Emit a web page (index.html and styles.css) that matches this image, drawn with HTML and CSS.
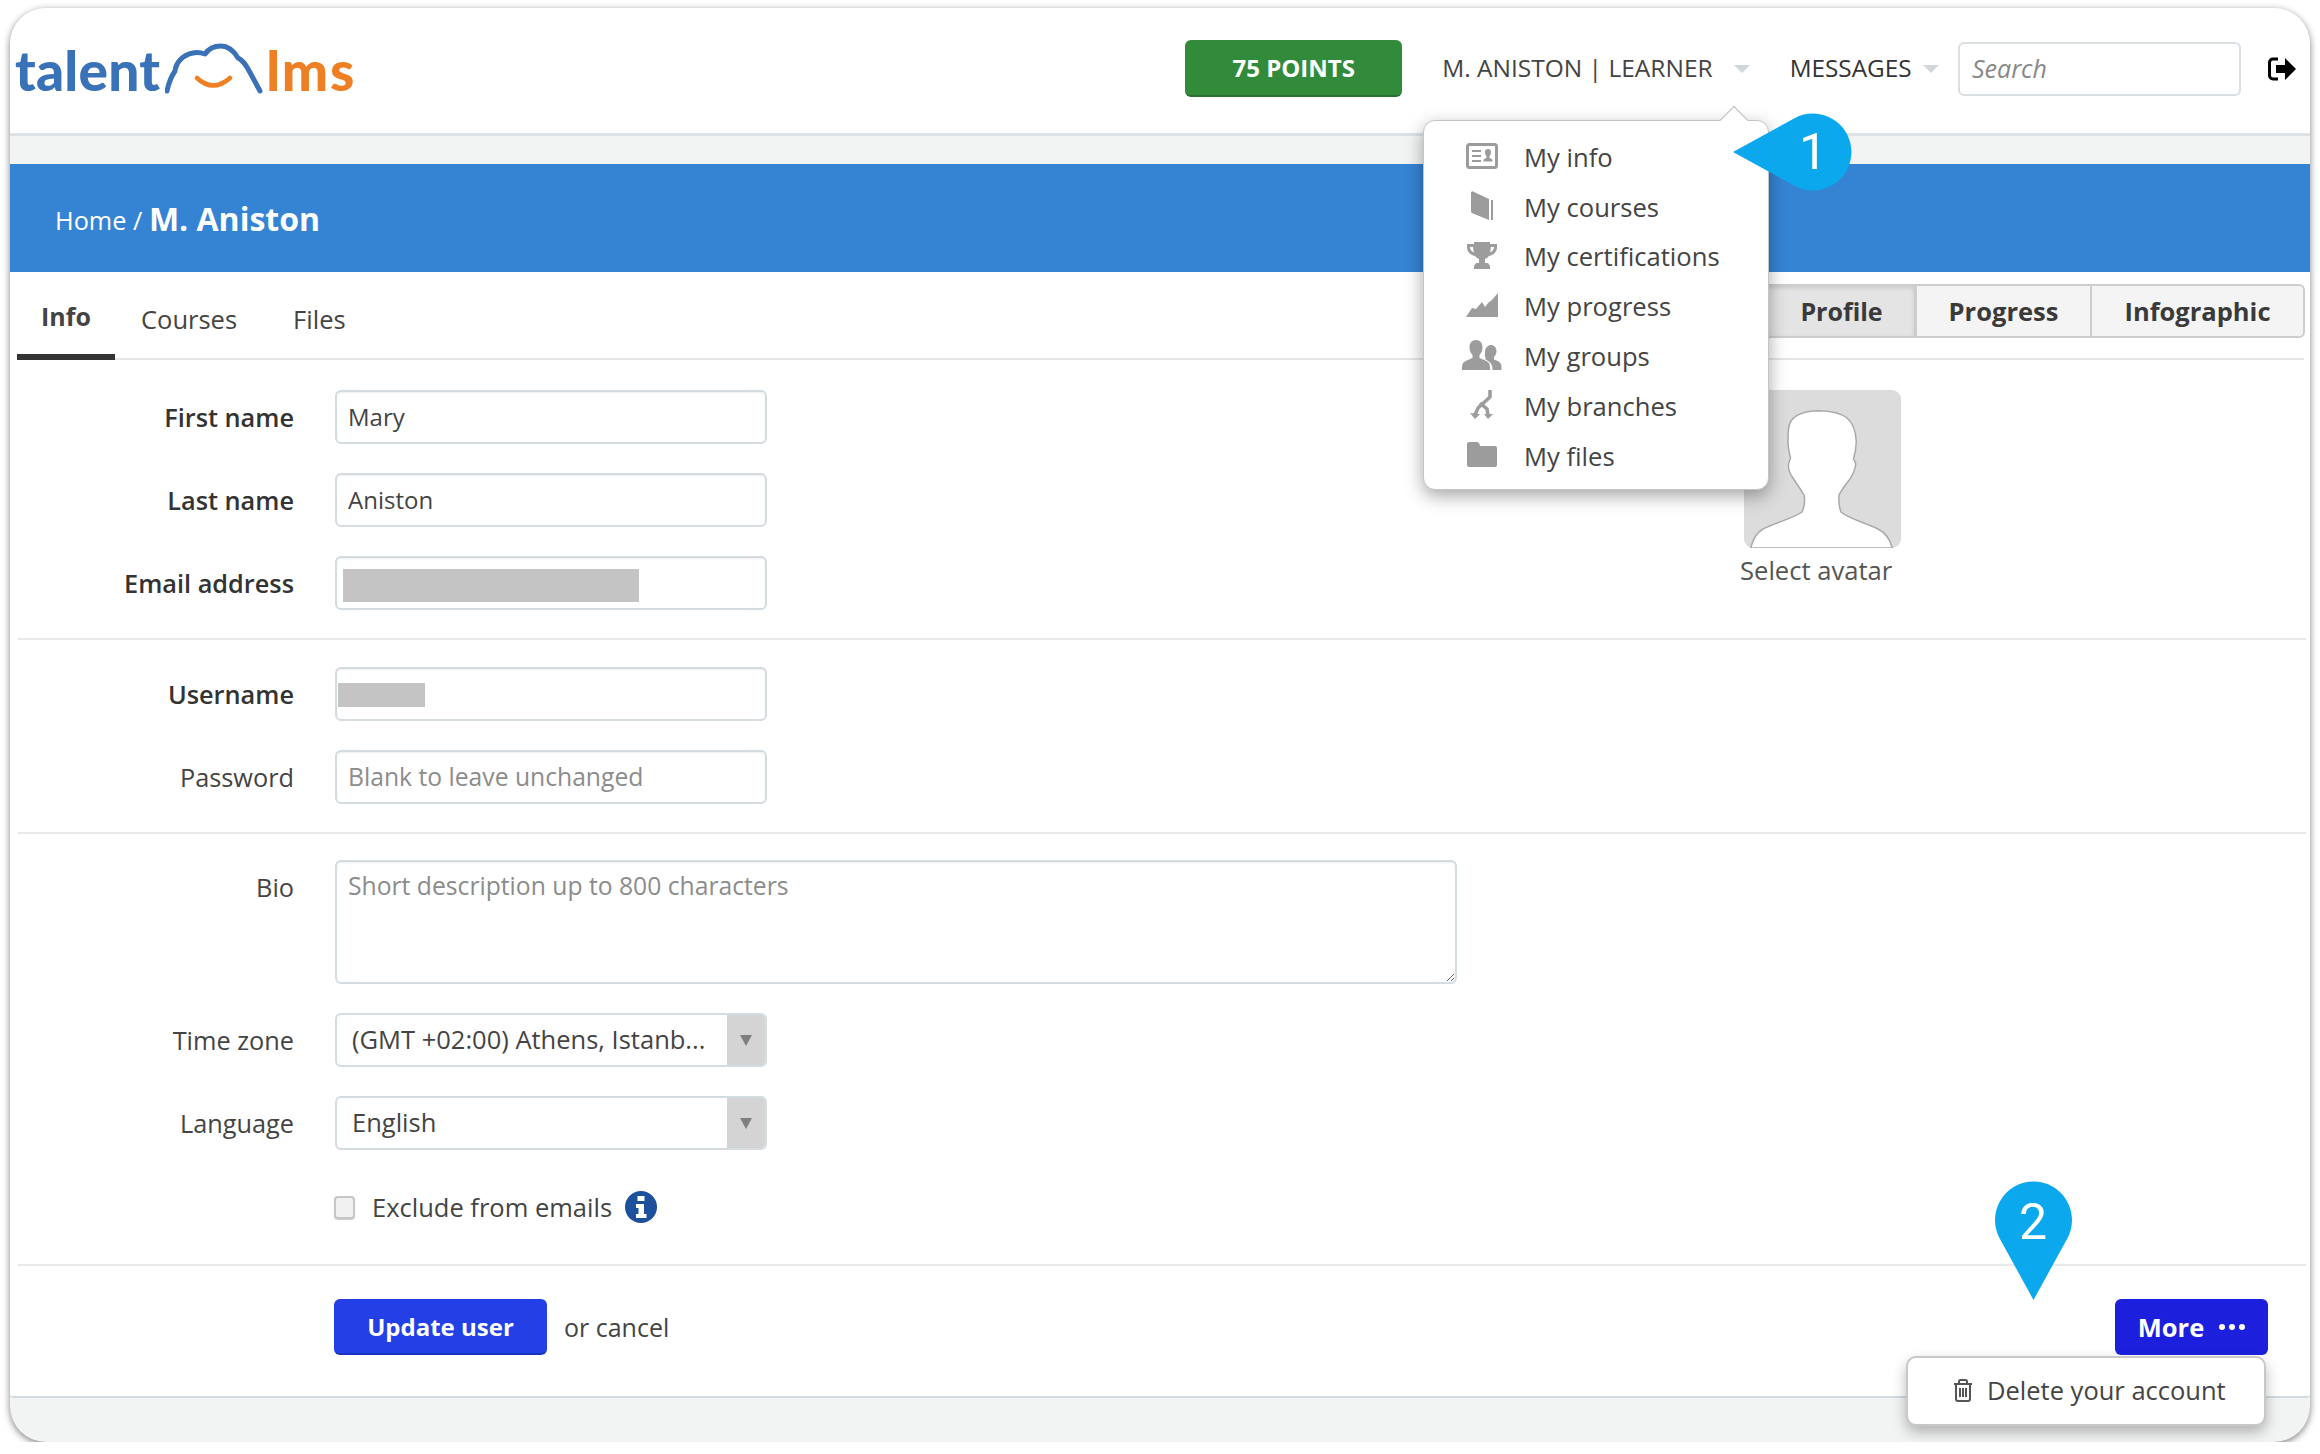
FILE: index.html
```html
<!DOCTYPE html>
<html lang="en">
<head>
<meta charset="utf-8">
<title>M. Aniston</title>
<link rel="stylesheet" href="styles.css">
</head>
<body>
<div class="window">
  <header class="topbar">
    <div class="logo">
      <span class="logo-talent">talent</span>
      <svg class="logo-cloud" width="100" height="56" viewBox="0 0 100 56"><path class="cloud-line" d="M2 50C4 40 8 33 10 30C11 22 17 14 28 12C33 11 37 12 40 13C44 7 50 5 56 5C64 5 70 12 73 17C80 20 84 30 88 37L95 50"/><path class="cloud-smile" d="M32 37Q48 52 65 37"/></svg>
      <span class="logo-lms">lms</span>
    </div>
    <nav class="topnav">
      <a class="points">75 POINTS</a>
      <span class="nav-user">M. ANISTON | LEARNER</span>
      <i class="nav-caret caret-user"></i>
      <span class="nav-msg">MESSAGES</span>
      <i class="nav-caret caret-msg"></i>
      <input class="search" placeholder="Search">
      <svg class="logout" width="30" height="24" viewBox="0 0 30 24"><path class="logout-bracket" d="M11 2H6a3.500 3.500 0 0 0-3.500 3.500v13A3.500 3.500 0 0 0 6 22h5"/><path d="M9 8h9V1l11 11-11 11v-7H9z"/></svg>
    </nav>
  </header>

  <div class="crumbs"><span class="crumb-home">Home / </span><strong class="crumb-name">M. Aniston</strong></div>

  <main class="panel">
    <div class="tabbar">
      <a class="tab tab-active">Info</a>
      <a class="tab">Courses</a>
      <a class="tab">Files</a>
      <div class="seg">
        <a class="seg-btn seg-on">Profile</a>
        <a class="seg-btn seg-b">Progress</a>
        <a class="seg-btn seg-c">Infographic</a>
      </div>
    </div>

    <section class="sect sect-top">
      <div class="fields">
        <div class="field"><label class="lab lab-strong">First name</label><input class="inp" value="Mary"></div>
        <div class="field"><label class="lab lab-strong">Last name</label><input class="inp" value="Aniston"></div>
        <div class="field"><label class="lab lab-strong">Email address</label><div class="inp-wrap"><input class="inp"><span class="redact redact-email"></span></div></div>
      </div>
      <div class="avatar-col">
        <svg class="avatar" width="157" height="158" viewBox="0 0 157 158"><rect class="avatar-bg" width="157" height="158" rx="9"/><path class="avatar-bust" d="M6.700 158C9 149 12 143 19 139C30 133 48 129 58 122C61 116 61 110 60 105C56 98 52 93 49 88C46 84 44 79 44.500 74C45 72 46 70 46.500 68C45 62 44 57 44 52C44 42 44 36 47 31C51 25 60 21 75 20.700C88 21 97 23 103 28C110 34 112 43 112.300 52C112 58 111 64 109.500 69C110.500 71 111.700 72 111.700 75C111 80 109 84 106 89C102 94 98 99 95 105C94.500 111 95 117 97 122C105 129 122 133 134 139C142 143 146 149 148.300 158Z"/></svg>
        <span class="avatar-cap">Select avatar</span>
      </div>
    </section>
    <hr class="rule">
    <section class="sect sect-mid">
      <div class="fields">
        <div class="field"><label class="lab lab-strong">Username</label><div class="inp-wrap"><input class="inp"><span class="redact redact-user"></span></div></div>
        <div class="field"><label class="lab">Password</label><input class="inp" placeholder="Blank to leave unchanged"></div>
      </div>
    </section>
    <hr class="rule">
    <section class="sect sect-low">
      <div class="fields">
        <div class="field field-bio"><label class="lab lab-bio">Bio</label><textarea class="bio" placeholder="Short description up to 800 characters"></textarea></div>
        <div class="field"><label class="lab">Time zone</label><div class="sel"><span class="sel-val">(GMT +02:00) Athens, Istanb...</span><span class="sel-arrow"><i></i></span></div></div>
        <div class="field"><label class="lab">Language</label><div class="sel"><span class="sel-val">English</span><span class="sel-arrow"><i></i></span></div></div>
        <div class="field field-check"><span></span><div class="check-row"><i class="check"></i><span class="check-text">Exclude from emails</span>
          <svg class="info" width="32" height="32" viewBox="0 0 32 32"><circle cx="16" cy="16" r="16"/><path class="info-i" d="M12.500 5h7v5h-7zM11 13h8v10h2.500v4h-10.500v-4h2.500v-6H11z"/></svg></div></div>
      </div>
    </section>
    <hr class="rule">
    <div class="actions">
      <button class="btn-update">Update user</button>
      <span class="or-cancel">or cancel</span>
      <button class="btn-more">More<span class="dots"><i></i><i></i><i></i></span></button>
    </div>
  </main>

  <div class="menu">
    <span class="menu-tip"></span>
    <a class="menu-row"><span class="mi"><svg width="32" height="26" viewBox="0 0 32 26"><rect class="ico-line" x="1.500" y="1.500" width="29" height="23" rx="2"/><path class="ico-fill" d="M6 7h9v2H6zM6 12h9v2H6zM6 17h9v2H6zM22 6a3.200 3.200 0 0 1 3 3.500c0 1.800-1 3.200-1.500 3.800v1.400c1 .7 2.500 1 3 2.300v1.500h-9V17c.5-1.300 2-1.600 3-2.300v-1.400c-.5-.6-1.500-2-1.500-3.800A3.200 3.200 0 0 1 22 6z"/></svg></span>My info</a>
    <a class="menu-row"><span class="mi"><svg width="22" height="30" viewBox="0 0 22 30"><path class="ico-fill" d="M2 .5l16 7.500v21L2 22.500A2.500 2.500 0 0 1 0 20V2.500C0 1 1 0 2 .5z"/><path class="ico-fill" d="M20 9h2v20h-2z"/></svg></span>My courses</a>
    <a class="menu-row"><span class="mi"><svg width="30" height="27" viewBox="0 0 30 27"><path class="ico-fill" d="M7 0h16v2h7v3c0 4.500-3 8-8 9-1 1.500-3 2.500-4 3v4h3l2 3v3H7v-3l2-3h3v-4c-1-.5-3-1.500-4-3-5-1-8-4.500-8-9V2h7zM3 5c0 2.500 1.500 4.500 4 5.500-.5-1.500-.8-3.500-.9-5.500zM27 5h-3.100c-.1 2-.4 4-.9 5.500 2.500-1 4-3 4-5.500z"/></svg></span>My certifications</a>
    <a class="menu-row"><span class="mi"><svg width="32" height="24" viewBox="0 0 32 24"><path class="ico-fill" d="M0 24l6-9 4 1 6-7 3 5 4-5 2-1 7-8v24z"/></svg></span>My progress</a>
    <a class="menu-row"><span class="mi"><svg width="40" height="30" viewBox="0 0 40 30"><path class="ico-fill" d="M14 0c4 0 6.500 3 6.500 7 0 3-1 6-3 8v3c3 1.500 9 3 10 6 .5 2 .5 4 .5 6H0c0-2 0-4 .5-6 1-3 7-4.500 10-6v-3c-2-2-3-5-3-8 0-4 2.500-7 6.500-7z"/><path class="ico-fill" d="M29 5c3 0 5.500 2.500 5.500 6 0 2.500-1 4.500-2.500 6v2.500c2.500 1 6 2 7 4.500.5 2 .5 4 .5 6h-9c0-3-.5-6-3-8-1.500-1.200-3-2-4-2.500v-2c-1-1.500-.5-4-.5-6 0-3.500 3-6.500 6-6.500z"/></svg></span>My groups</a>
    <a class="menu-row"><span class="mi"><svg width="24" height="29" viewBox="0 0 24 29"><path class="ico-stroke" d="M20 0v7L8 18l-3 7M10 13l7 6 1 6"/><path class="ico-fill" d="M0 23l5 6 5-5zM14 24h9l-5 5z"/></svg></span>My branches</a>
    <a class="menu-row"><span class="mi"><svg width="30" height="25" viewBox="0 0 30 25"><path class="ico-fill" d="M2 0h8c1.500 0 2.500 1 3 4h15a2 2 0 0 1 2 2v17a2 2 0 0 1-2 2H2a2 2 0 0 1-2-2V2a2 2 0 0 1 2-2z"/></svg></span>My files</a>
  </div>

  <div class="pin pin-one"><svg width="123" height="78" viewBox="0 0 123 78"><path class="pin-fill" d="M2 39L63.500 5.200A38.500 38.500 0 1 1 63.500 72.800Z"/></svg><span class="pin-num pin-num-one">1</span></div>
  <div class="pin pin-two"><svg width="79" height="120" viewBox="0 0 79 120"><path class="pin-fill" d="M39.500 119L5.700 57.500A38.500 38.500 0 1 1 73.300 57.500Z"/></svg><span class="pin-num pin-num-two">2</span></div>

  <div class="popup"><svg class="trash" width="20" height="23" viewBox="0 0 20 23"><path class="trash-line" d="M1 5h18M6 5V2.500A1.500 1.500 0 0 1 7.500 1h5A1.500 1.500 0 0 1 14 2.500V5M3 5v15a2 2 0 0 0 2 2h10a2 2 0 0 0 2-2V5M7 9v9M10 9v9M13 9v9"/></svg><span>Delete your account</span></div>
</div>
</body>
</html>
```
FILE: styles.css
```css
* { box-sizing: border-box; }
html, body { margin: 0; padding: 0; background: #fff; }
body { font-family: "Open Sans", sans-serif; color: #444; font-size: 25px; }
.window { position: relative; margin: 8px 10px 0; width: 2300px; height: 1434px; background: #f2f3f3; border-radius: 36px; box-shadow: 0 2px 7px rgba(0,0,0,.5); display: flex; flex-direction: column; overflow: visible; }

.topbar { height: 128px; background: #fff; border-radius: 36px 36px 0 0; border-bottom: 3px solid #dde2e4; display: flex; align-items: flex-start; justify-content: space-between; flex: none; }
.logo { display: flex; align-items: flex-start; padding: 32px 0 0 5px; }
.logo-talent, .logo-lms { font-family: Lato, sans-serif; font-weight: 900; font-size: 55px; line-height: 60px; letter-spacing: .2px; }
.logo-talent { color: #3a72b8; }
.logo-lms { color: #ee7f23; margin-left: 1px; letter-spacing: 1.700px; }
.logo-cloud { margin-left: 5px; margin-top: 1px; flex: none; }
.cloud-line { fill: none; stroke: #3a72b8; stroke-width: 5; stroke-linecap: round; stroke-linejoin: round; }
.cloud-smile { fill: none; stroke: #ee7f23; stroke-width: 4.500; stroke-linecap: round; }

.topnav { display: flex; align-items: center; padding: 32px 13px 0 0; color: #444; }
.points { width: 217px; height: 57px; background: #328b3a; border-radius: 6px; border-bottom: 2px solid #28702f; color: #fff; font-weight: 700; font-size: 24px; display: flex; align-items: center; justify-content: center; }
.nav-user { margin: 0 0 2px 40px; font-size: 24.500px; }
.nav-msg { margin: 0 0 2px 40px; font-size: 24.300px; color: #333; }
.nav-caret { width: 0; height: 0; border-left: 8px solid transparent; border-right: 8px solid transparent; border-top: 8px solid #cfd7da; }
.caret-user { margin-left: 21px; }
.caret-msg { margin-left: 11px; }
.search { margin-left: 19.500px; width: 283px; height: 54px; border: 2px solid #d9dfe2; border-radius: 6px; padding: 0 12px 2px; font: italic 25px "Open Sans", sans-serif; outline: none; }
.search::placeholder { color: #888; }
.logout { margin-left: 26px; }
.logout-bracket { fill: none; stroke: #000; stroke-width: 3; }

.crumbs { margin-top: 28px; height: 108px; background: #3584d4; color: #fff; padding-left: 45px; flex: none; display: flex; align-items: center; white-space: pre; }
.crumb-home { font-size: 25.300px; margin-top: 4px; }
.crumb-name { font-size: 32px; font-weight: 700; }

.panel { background: #fff; height: 1126px; border-bottom: 2px solid #cfdbe0; border-radius: 0 0 4px 4px; flex: none; }
.tabbar { height: 88px; margin: 0 6px 0 7px; border-bottom: 2px solid #e4e6e6; display: flex; align-items: flex-start; }
.tab { height: 88px; padding: 29px 26px 0; font-size: 25.500px; line-height: 36px; color: #444; }
.tab:nth-child(3) { margin-left: 4px; }
.tab-active { padding: 26px 24px 0; font-weight: 700; font-size: 25px; width: 98px; border-bottom: 6px solid #333; color: #444; }
.seg { margin-left: auto; margin-top: 12px; margin-right: -1px; display: flex; height: 54px; }
.seg-btn { height: 54px; background: #f4f4f4; border: 2px solid #cdcdcd; font-weight: 700; font-size: 25.500px; color: #3a3a3a; display: flex; align-items: center; justify-content: center; }
.seg-on { width: 176px; background: #e4e4e4; box-shadow: inset 0 2px 4px rgba(0,0,0,.12); padding-left: 26px; border-right-width: 3px; font-size: 25px; }
.seg-b { width: 175px; border-left: none; }
.seg-c { width: 213px; border-left: none; border-radius: 0 6px 6px 0; }

.sect { display: flex; }
.sect-top { padding-top: 30px; }
.sect-mid { padding-top: 27px; }
.sect-low { padding-top: 26px; padding-bottom: 12px; }
.fields { display: flex; flex-direction: column; gap: 29px; width: 1500px; }
.field { display: grid; grid-template-columns: 284px 432px; column-gap: 41px; align-items: center; min-height: 54px; }
.lab { text-align: right; font-size: 25.300px; color: #444; }
.lab-strong { font-weight: 600; color: #333; }
.lab-bio { align-self: start; padding-top: 10px; }
.inp { width: 100%; height: 54px; border: 2px solid #d5dcdf; border-radius: 6px; padding: 0 11px 2px; font: 24px "Open Sans", sans-serif; color: #444; outline: none; display: block; box-shadow: inset 0 1px 2px rgba(0,0,0,.07); }
.inp::placeholder, .bio::placeholder { color: #8c8c8c; opacity: 1; font-size: 24.700px; }
.inp-wrap { position: relative; }
.redact { position: absolute; background: #c4c4c4; }
.redact-email { left: 8px; top: 13px; width: 296px; height: 33px; }
.redact-user { left: 3px; top: 16px; width: 87px; height: 24px; }

.avatar-col { margin-left: 234px; display: flex; flex-direction: column; align-items: flex-start; }
.avatar { display: block; }
.avatar-bg { fill: #dcdcdc; }
.avatar-bust { fill: #fff; stroke: #a9a9a9; stroke-width: 1.500; }
.avatar-cap { font-size: 25.600px; color: #555; margin-left: -4px; margin-top: 3px; line-height: 40px; }

.rule { border: 0; height: 2px; background: #e9eaea; margin: 28px 4px 0 8px; }
.field-bio { grid-template-columns: 284px 1122px; }
.bio { height: 124px; border: 2px solid #d5dcdf; border-radius: 6px; padding: 7px 11px; font: 24.700px "Open Sans", sans-serif; outline: none; width: 100%; display: block; box-shadow: inset 0 1px 2px rgba(0,0,0,.07); }
.sel { height: 54px; border: 2px solid #d5dcdf; border-radius: 6px; display: flex; overflow: hidden; }
.sel-val { flex: 1; padding-left: 15px; font-size: 25.500px; line-height: 48px; color: #444; white-space: nowrap; }
.sel-arrow { width: 38px; background: #d4d4d4; display: flex; align-items: center; justify-content: center; }
.sel-arrow i { width: 0; height: 0; border-left: 6px solid transparent; border-right: 6px solid transparent; border-top: 11px solid #7f7f7f; }
.field-check { margin-top: 11px; min-height: 32px; }
.check-row { display: flex; align-items: center; white-space: nowrap; }
.check { width: 21px; height: 23px; border: 2px solid #c6c6c6; border-radius: 4px; background: #f1f1f1; box-shadow: 0 1px 1px rgba(0,0,0,.2); margin-left: -1px; }
.check-text { margin-left: 17px; font-size: 25.500px; color: #444; }
.info { margin-left: 13px; flex: none; }
.info circle { fill: #1c4f9c; }
.info-i { fill: #fff; }

.actions { display: flex; align-items: center; height: 56px; margin: 33px 0 0 324px; padding-right: 42px; }
.btn-update { width: 213px; height: 56px; background: #2240e6; border: 0; border-bottom: 2px solid #1a34c0; border-radius: 6px; color: #fff; font: 700 24px "Open Sans", sans-serif; }
.or-cancel { margin-left: 17px; font-size: 25px; color: #444; }
.btn-more { margin-left: auto; width: 153px; height: 56px; background: #1c20dd; border: 0; border-radius: 6px; color: #fff; font: 700 25.500px "Open Sans", sans-serif; display: flex; align-items: center; justify-content: center; gap: 15px; }
.dots { display: flex; gap: 4px; }
.dots i { width: 6px; height: 6px; background: #fff; border-radius: 50%; }

.menu { position: absolute; left: 1413px; top: 112px; width: 346px; height: 370px; padding: 11.500px 0 0 38px; background: #fff; border: 1px solid #c4c4c4; border-radius: 12px; box-shadow: 0 6px 18px rgba(0,0,0,.35); }
.menu-tip { position: absolute; left: 300px; top: -11px; width: 20px; height: 20px; background: #fff; border-left: 1px solid #bbb; border-top: 1px solid #bbb; transform: rotate(45deg); }
.menu-row { display: flex; align-items: center; height: 49.800px; font-size: 25.600px; color: #444; }
.mi { width: 40px; margin-right: 22px; display: flex; justify-content: center; margin-bottom: 3px; }
.ico-fill { fill: #9c9c9c; }
.ico-line { fill: #fff; stroke: #9c9c9c; stroke-width: 3; }
.ico-stroke { fill: none; stroke: #9c9c9c; stroke-width: 3.500; }

.pin { position: absolute; }
.pin svg { display: block; }
.pin-fill { fill: #0ba8ee; }
.pin-one { left: 1721px; top: 105px; }
.pin-two { left: 1984px; top: 1173px; }
.pin-num { position: absolute; font-family: Roboto, sans-serif; font-weight: 400; font-size: 50px; color: #fff; line-height: 60px; }
.pin-num-one { left: 68px; top: 9px; }
.pin-num-two { left: 25px; top: 11px; }

.popup { position: absolute; left: 1896px; top: 1348px; width: 360px; height: 70px; padding: 0 0 2px 45px; background: #fff; border: 2px solid #c8c8c8; border-radius: 10px; box-shadow: 0 6px 14px rgba(0,0,0,.28); display: flex; align-items: center; font-size: 25.500px; color: #444; }
.trash { margin-right: 14px; }
.trash-line { fill: none; stroke: #555; stroke-width: 2; }
```
